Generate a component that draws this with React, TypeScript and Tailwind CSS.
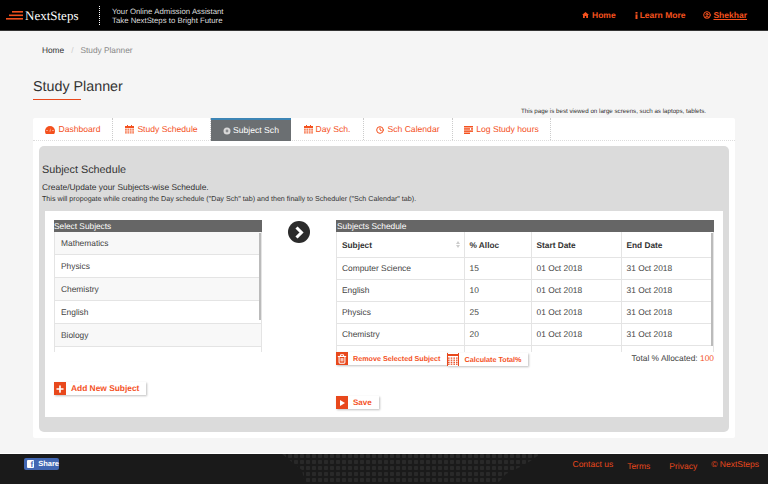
import { CircleUser, Clock, Plus, Trash2 } from 'lucide-react';
import type { ReactNode } from 'react';

const tabs = [
  { label: 'Dashboard', width: 'w-[79px]', icon: <GaugeIcon /> },
  { label: 'Study Schedule', width: 'w-[98px]', icon: <CalendarIcon /> },
  { label: 'Subject Sch', width: 'w-[80px]', icon: <SubjectIcon />, active: true },
  { label: 'Day Sch.', width: 'w-[73px]', icon: <CalendarIcon /> },
  { label: 'Sch Calendar', width: 'w-[89px]', icon: <Clock size={8} strokeWidth={3} /> },
  { label: 'Log Study hours', width: 'w-[98px]', icon: <LogIcon /> },
];

const subjects = ['Mathematics', 'Physics', 'Chemistry', 'English', 'Biology', 'History'];

const schedule = [
  { subject: 'Computer Science', alloc: 15 },
  { subject: 'English', alloc: 10 },
  { subject: 'Physics', alloc: 25 },
  { subject: 'Chemistry', alloc: 20 },
  { subject: 'Geography', alloc: 30 },
];

function GaugeIcon() {
  return (
    <svg width="10" height="8" viewBox="0 0 10 8" fill="#f4511e">
      <path d="M5 0a5 5 0 0 0-5 5c0 1 .3 2 .8 3h8.4c.5-1 .8-2 .8-3a5 5 0 0 0-5-5Z" />
      <path d="M5.4 2 4.6 5.4h.8Z" fill="white" />
      <circle cx="2" cy="4.5" r=".6" fill="white" />
      <circle cx="8" cy="4.5" r=".6" fill="white" />
    </svg>
  );
}

function CalendarIcon() {
  return (
    <svg width="9" height="9" viewBox="0 0 9 9" fill="#f4511e">
      <rect x="2" y="0" width="1" height="2" />
      <rect x="6" y="0" width="1" height="2" />
      <rect x="0" y="1" width="9" height="2" />
      {[3.6, 5.4, 7.2].map((y) =>
        [0, 2.4, 4.8, 7.2].map((x) => <rect key={`${x}-${y}`} x={x} y={y} width="1.8" height="1.3" opacity="0.8" />),
      )}
    </svg>
  );
}

function SubjectIcon() {
  return (
    <svg width="8" height="8" viewBox="0 0 8 8">
      <circle cx="4" cy="4" r="3.5" fill="#d8d8d8" />
      <circle cx="4" cy="4" r="1.4" fill="#8a8d90" />
    </svg>
  );
}

function LogIcon() {
  return (
    <svg width="9" height="8" viewBox="0 0 9 8" fill="#f4511e">
      <rect width="9" height="1.5" />
      <rect y="2.2" width="6" height="1.5" />
      <rect x="7" y="2.2" width="2" height="1.5" />
      <rect y="4.4" width="9" height="1.5" />
      <rect y="6.5" width="6" height="1.5" />
    </svg>
  );
}

function HomeIcon() {
  return (
    <svg width="7" height="6" viewBox="0 0 7 6" fill="#f4511e">
      <path d="M3.5 0 7 3H6v3H4.2V4H2.8v2H1V3H0Z" />
    </svg>
  );
}

function InfoIcon() {
  return (
    <svg width="3" height="7" viewBox="0 0 3 7" fill="#f4511e">
      <rect x="0.5" width="2" height="1.6" />
      <rect x="0.5" y="2.4" width="2" height="4.6" />
    </svg>
  );
}

function CalcIcon() {
  return (
    <svg width="10" height="11" viewBox="0 0 10 11" fill="#e8481c">
      <rect width="10" height="2" />
      {[3.5, 5.6, 7.7, 9.6].map((y) =>
        [0, 2.7, 5.4, 8].map((x) => <rect key={`${x}-${y}`} x={x} y={y} width="1.6" height="1.2" />),
      )}
    </svg>
  );
}

function LogoMark() {
  return (
    <svg width="17" height="9" viewBox="0 0 17 9" fill="#f0501e">
      <rect x="6" y="0" width="11" height="1.6" />
      <rect x="3" y="3.5" width="14" height="1.6" />
      <rect x="0" y="7" width="17" height="1.6" />
    </svg>
  );
}

function ActionButton({
  icon,
  label,
  outline,
  className,
  textClass = 'text-[8px]',
}: {
  icon: ReactNode;
  label: string;
  outline?: boolean;
  className?: string;
  textClass?: string;
}) {
  return (
    <div className={`flex h-[13px] items-center bg-white shadow-[1px_1px_2px_rgba(0,0,0,0.25)] ${className ?? ''}`}>
      <span
        className={`flex h-[13px] w-[12px] shrink-0 items-center justify-center ${
          outline ? 'border-x border-[#e8481c] bg-white' : 'bg-[#e8481c] text-white'
        }`}
      >
        {icon}
      </span>
      <span className={`pr-[7px] pl-[5px] leading-none font-bold whitespace-nowrap text-[#f4511e] ${textClass}`}>{label}</span>
    </div>
  );
}

function WorldDots() {
  return (
    <svg className="absolute top-0 left-[282px] h-[30px] w-[260px]" viewBox="0 0 260 30">
      <defs>
        <pattern id="dots" width="6" height="6" patternUnits="userSpaceOnUse">
          <rect width="4" height="4" rx="1" fill="#292929" />
        </pattern>
      </defs>
      <polygon points="0,0 258,0 250,6 240,12 224,20 215,30 23,30 20,16 10,8" fill="url(#dots)" />
    </svg>
  );
}

export default function App() {
  return (
    <div className="flex h-[484px] w-[768px] flex-col overflow-hidden bg-[#f5f5f5] font-['Liberation_Sans',Arial,sans-serif] text-[#444] [text-rendering:geometricPrecision]">
      {/* top bar */}
      <header className="flex h-[31px] shrink-0 items-center border-b border-[#333] bg-black pl-[6px] text-white">
        <LogoMark />
        <span className="ml-[2px] w-[74px] font-['Liberation_Serif',serif] text-[13px] leading-none">NextSteps</span>
        <div className="h-[19px] border-l border-dotted border-white" />
        <div className="ml-[12px] pt-px text-[7.8px] leading-[9px] text-[#ddd]">
          <div>Your Online Admission Assistant</div>
          <div>Take NextSteps to Bright Future</div>
        </div>
        <nav className="ml-auto flex items-center pr-[21px] text-[8.5px] font-bold text-[#f4511e]">
          <span className="flex items-center gap-[3px]">
            <HomeIcon />
            Home
          </span>
          <span className="ml-[19px] flex items-center gap-[2px]">
            <InfoIcon />
            Learn More
          </span>
          <span className="ml-[18px] flex items-center gap-[2px]">
            <CircleUser size={8} strokeWidth={3} />
            <span className="underline">Shekhar</span>
          </span>
        </nav>
      </header>

      {/* breadcrumb + title */}
      <div className="mt-[14px] ml-[42px] flex h-[10px] items-center text-[8.3px] leading-none">
        <span className="text-[#333]">Home</span>
        <span className="mx-[7px] text-[#ccc]">/</span>
        <span className="text-[#888]">Study Planner</span>
      </div>
      <h1 className="mt-[23px] ml-[33px] text-[14.3px] leading-[18px] text-[#333]">Study Planner</h1>
      <div className="mt-[3px] ml-[33px] h-px w-[48px] bg-[#e8481c]" />
      <p className="mt-[7px] mr-[62px] text-right text-[6.2px] leading-[9px] text-[#333]">
        This page is best viewed on large screens, such as laptops, tablets.
      </p>

      {/* main card */}
      <main className="mx-[33px] mt-[2px] h-[320px] w-[702px] rounded-[2px] bg-white">
        <div className="flex h-[23px] border-b border-dotted border-[#ddd] pl-px">
          {tabs.map((tab) => (
            <div
              key={tab.label}
              className={
                tab.active
                  ? `flex ${tab.width} h-[23px] items-center justify-center gap-[2px] border-t-2 border-[#3d85b5] bg-[#6b6f72] text-[8.6px] text-white`
                  : `flex ${tab.width} items-center justify-center gap-[3px] border-r border-dotted border-[#ccc] pt-px text-[8.6px] text-[#f4511e]`
              }
            >
              {tab.icon}
              {tab.label}
            </div>
          ))}
        </div>

        <section className="mx-[6px] mt-[5px] h-[286px] w-[690px] rounded-[5px] bg-[#dbdbdb] px-[6px] pt-[18px]">
          <h2 className="ml-[-3px] text-[10.8px] leading-[12px] text-[#333]">Subject Schedule</h2>
          <p className="mt-[6px] ml-[-3px] text-[8.4px] leading-[10px] text-[#333]">Create/Update your Subjects-wise Schedule.</p>
          <p className="mt-[3px] ml-[-3px] text-[7.15px] leading-[9px] text-[#333]">
            This will propogate while creating the Day schedule ("Day Sch" tab) and then finally to Scheduler ("Sch Calendar" tab).
          </p>

          <div className="mt-[7px] flex h-[206px] bg-white pt-[9px] pl-[9px]">
            {/* left column */}
            <div className="w-[208px]">
              <div className="h-[12px] bg-[#666] text-[8.3px] leading-[12px] text-white">Select Subjects</div>
              <div className="relative h-[120px] overflow-hidden border-x border-[#e4e4e4]">
                {subjects.map((s, i) => (
                  <div
                    key={s}
                    className={`h-[23px] border-b border-[#e4e4e4] pl-[6px] text-[8.4px] leading-[22px] ${i % 2 === 0 ? 'bg-[#f8f8f8]' : 'bg-white'}`}
                  >
                    {s === 'History' ? '' : s}
                  </div>
                ))}
                <div className="absolute top-px right-0 h-[87px] w-[2px] bg-[#bbb]" />
              </div>
              <ActionButton
                className="mt-[30px] w-fit"
                textClass="text-[8.4px]"
                icon={<Plus size={10} strokeWidth={4} />}
                label="Add New Subject"
              />
            </div>

            {/* arrow */}
            <div className="ml-[26px] w-[48px] pt-px">
              <div className="flex h-[22px] w-[22px] items-center justify-center rounded-full bg-[#2b2b2b]">
                <svg width="10" height="13" viewBox="0 0 10 13" fill="none" stroke="white" strokeWidth="3">
                  <path d="M2.5 1.5 7.5 6.5 2.5 11.5" />
                </svg>
              </div>
            </div>

            {/* right column */}
            <div className="w-[378px]">
              <div className="h-[12px] bg-[#666] pl-px text-[8.4px] leading-[12px] text-white">Subjects Schedule</div>
              <div className="relative h-[120px] overflow-hidden border-x border-[#e4e4e4] text-[8.4px]">
                <table className="w-[375px] table-fixed border-collapse">
                  <thead>
                    <tr className="h-[25px] border-b border-[#e4e4e4] text-left text-[8.3px] font-bold text-[#333]">
                      <th className="relative w-[127px] border-r border-[#e4e4e4] pt-px pl-[5px]">
                        Subject
                        <span className="absolute top-[9px] right-[4px] h-0 w-0 border-x-[2px] border-b-[3px] border-x-transparent border-b-[#ccc]" />
                        <span className="absolute top-[13px] right-[4px] h-0 w-0 border-x-[2px] border-t-[3px] border-x-transparent border-t-[#ccc]" />
                      </th>
                      <th className="w-[67px] border-r border-[#e4e4e4] pt-px pl-[5px]">% Alloc</th>
                      <th className="w-[90px] border-r border-[#e4e4e4] pt-px pl-[5px]">Start Date</th>
                      <th className="pt-px pl-[5px]">End Date</th>
                    </tr>
                  </thead>
                  <tbody>
                    {schedule.map((row, i) => (
                      <tr key={row.subject} className="h-[22px] border-b border-[#e4e4e4]">
                        <td className="border-r border-[#e4e4e4] pl-[5px]">{i < 4 ? row.subject : ''}</td>
                        <td className="border-r border-[#e4e4e4] pl-[5px]">{i < 4 ? row.alloc : ''}</td>
                        <td className="border-r border-[#e4e4e4] pl-[5px]">{i < 4 ? '01 Oct 2018' : ''}</td>
                        <td className="pl-[5px]">{i < 4 ? '31 Oct 2018' : ''}</td>
                      </tr>
                    ))}
                  </tbody>
                </table>
                <div className="absolute top-px right-0 h-[113px] w-[2px] bg-[#bbb]" />
              </div>
              <div className="flex items-start">
                <ActionButton textClass="text-[7.2px]" icon={<Trash2 size={10} strokeWidth={2.5} />} label="Remove Selected Subject" />
                <ActionButton textClass="text-[7.2px]" className="mt-px" outline icon={<CalcIcon />} label="Calculate Total%" />
                <span className="mt-[1px] ml-auto text-[8.4px] leading-[10px]">
                  Total % Allocated: <span className="text-[#f4511e]">100</span>
                </span>
              </div>
              <ActionButton
                className="mt-[30px] w-fit"
                icon={
                  <svg width="5" height="6" viewBox="0 0 5 6" fill="white">
                    <path d="M0 0 5 3 0 6Z" />
                  </svg>
                }
                label="Save"
              />
            </div>
          </div>
        </section>
      </main>

      {/* footer */}
      <footer className="relative mt-[15px] flex h-[31px] shrink-0 border-t border-white bg-[#1a1a1a]">
        <WorldDots />
        <div className="relative mt-[4px] ml-[24px] flex h-[12px] w-[35px] items-center rounded-[2px] bg-[#4267b2] pl-[3px] text-[7.5px] font-bold text-white">
          <span className="flex h-[8px] w-[8px] items-end justify-end rounded-[1px] bg-white pr-px text-[8px] leading-[7px] text-[#4267b2]">f</span>
          <span className="ml-[4px]">Share</span>
        </div>
        <div className="relative ml-auto flex pr-[9px] text-[8.5px] text-[#e8481c]">
          <span className="mt-[4px]">Contact us</span>
          <span className="mt-[6px] ml-[14px]">Terms</span>
          <span className="mt-[6px] ml-[19px]">Privacy</span>
          <span className="mt-[4px] ml-[14px]">© NextSteps</span>
        </div>
      </footer>
    </div>
  );
}
